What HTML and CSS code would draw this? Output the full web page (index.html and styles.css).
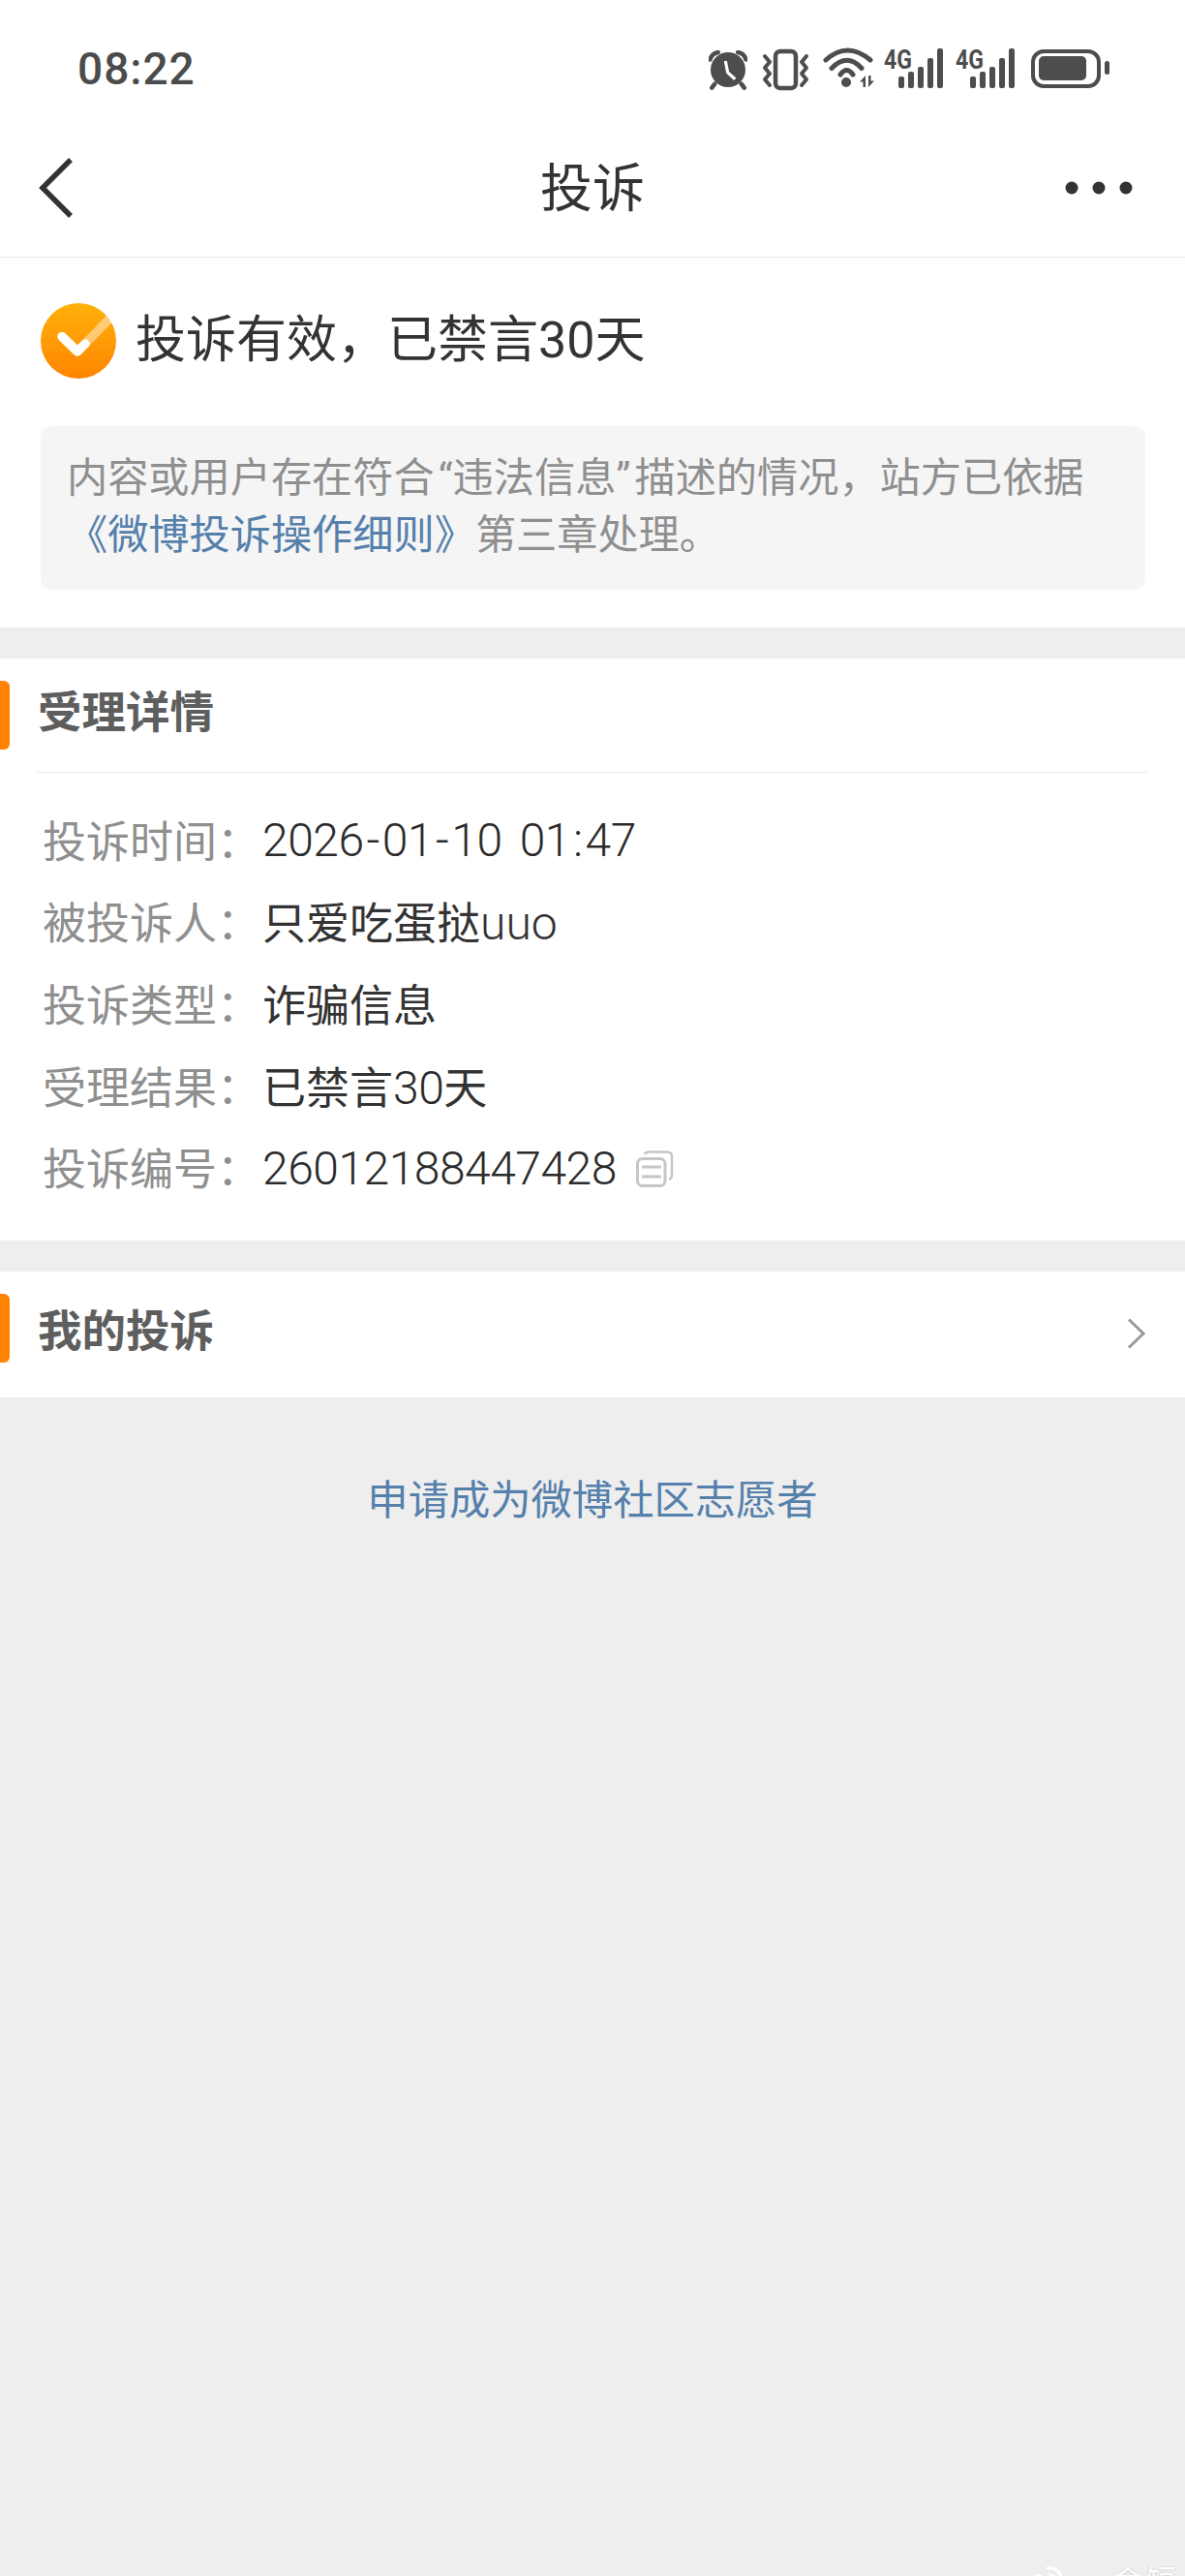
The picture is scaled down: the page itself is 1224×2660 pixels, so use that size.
FILE: index.html
```html
<!DOCTYPE html>
<html lang="zh-CN">
<head>
    <meta charset="UTF-8">
    <meta name="viewport" content="width=device-width, initial-scale=1.0">
    <title>投诉</title>
    <link rel="stylesheet" href="styles.css">
</head>
<body>

    <div class="status-bar">
        <span class="time">08:22</span>
        <div class="status-icons">
            <svg class="icon-alarm" width="40" height="42" viewBox="0 0 40 42">
                <circle cx="20" cy="20" r="18" fill="#4d4d4d"/>
                <path d="M17.3 11 L19.7 23 L27.3 29.7" fill="none" stroke="#fff" stroke-width="3.2"/>
                <path d="M1.500 9.500 Q3 3.500 9.700 2 M30.300 2 Q37 3.500 38.500 9.500 M6.300 34.700 L3.300 38.700 M33.700 34.700 L36.700 38.700" fill="none" stroke="#4d4d4d" stroke-width="4.500" stroke-linecap="round"/>
            </svg>
            <svg width="51" height="44" viewBox="0 0 51 44">
                <rect x="15" y="3" width="21" height="38" rx="5" fill="none" stroke="#4d4d4d" stroke-width="4.500"/>
                <path d="M4 8 L9 14 L4 20 L9 26 L4 32 L9 38 M47 8 L42 14 L47 20 L42 26 L47 32 L42 38" fill="none" stroke="#4d4d4d" stroke-width="4" stroke-linecap="round" stroke-linejoin="round"/>
            </svg>
            <svg class="icon-wifi" width="55" height="48" viewBox="0 0 55 48">
                <path d="M3 14 Q25 -6 49 14 M9 22.500 Q25 6 40 22.500 M18 29 Q24.500 20 31 29" fill="none" stroke="#4d4d4d" stroke-width="5" stroke-linecap="round"/>
                <circle cx="24" cy="37" r="5" fill="#4d4d4d"/>
                <path d="M44 30 V42 H41.500 V36.500 H38 Z M47 42 V30 H49.500 V35.500 H53 Z" fill="#4d4d4d"/>
            </svg>
            <svg class="icon-signal" width="61" height="50" viewBox="0 -8 61 50">
                <text class="net-label" x="0" y="21" textLength="29" lengthAdjust="spacingAndGlyphs">4G</text>
                <rect x="15" y="29" width="6" height="12" rx="2" fill="#4d4d4d"/>
                <rect x="25" y="24" width="6" height="17" rx="2" fill="#4d4d4d"/>
                <rect x="35" y="19" width="6" height="22" rx="2" fill="#4d4d4d"/>
                <rect x="45" y="10" width="6" height="31" rx="2" fill="#4d4d4d"/>
                <rect x="55" y="0" width="6" height="41" rx="2" fill="#4d4d4d"/>
            </svg>
            <svg class="icon-signal" width="61" height="50" viewBox="0 -8 61 50">
                <text class="net-label" x="0" y="21" textLength="29" lengthAdjust="spacingAndGlyphs">4G</text>
                <rect x="15" y="29" width="6" height="12" rx="2" fill="#4d4d4d"/>
                <rect x="25" y="24" width="6" height="17" rx="2" fill="#4d4d4d"/>
                <rect x="35" y="19" width="6" height="22" rx="2" fill="#4d4d4d"/>
                <rect x="45" y="10" width="6" height="31" rx="2" fill="#4d4d4d"/>
                <rect x="55" y="0" width="6" height="41" rx="2" fill="#4d4d4d"/>
            </svg>
            <svg class="icon-battery" width="81" height="40" viewBox="0 0 81 40">
                <rect x="2" y="2" width="68" height="36" rx="11" fill="none" stroke="#4d4d4d" stroke-width="4"/>
                <rect x="8" y="7" width="49" height="25" rx="5" fill="#4d4d4d"/>
                <rect x="76" y="12" width="5" height="14" rx="2.500" fill="#4d4d4d"/>
            </svg>
        </div>
    </div>

    <div class="nav-bar">
        <svg class="nav-back" width="38" height="64" viewBox="0 0 38 64">
            <path d="M35 3 L6 32 L35 61" fill="none" stroke="#333" stroke-width="5.500"/>
        </svg>
        <h1 class="nav-title">投诉</h1>
        <svg class="nav-more" width="70" height="14" viewBox="0 0 70 14">
            <circle cx="7" cy="7" r="6.500" fill="#333"/>
            <circle cx="35" cy="7" r="6.500" fill="#333"/>
            <circle cx="63" cy="7" r="6.500" fill="#333"/>
        </svg>
    </div>

    <div class="result-panel">
        <div class="result-head">
            <svg width="78" height="78" viewBox="0 0 78 78">
                <defs>
                    <linearGradient id="check-fill" x1="0" y1="0" x2="0" y2="1">
                        <stop offset="0" stop-color="#ffb10a"/>
                        <stop offset="1" stop-color="#ff8500"/>
                    </linearGradient>
                    <clipPath id="check-clip"><circle cx="39" cy="39" r="39"/></clipPath>
                </defs>
                <circle cx="39" cy="39" r="39" fill="url(#check-fill)"/>
                <path d="M46 42 L74 13" clip-path="url(#check-clip)" fill="none" stroke="#fff" stroke-opacity="0.45" stroke-width="9"/>
                <path d="M22 34.500 L38 50 L46 42" fill="none" stroke="#fff" stroke-width="9.500" stroke-linecap="round" stroke-linejoin="round"/>
            </svg>
            <span class="result-text">投诉有效，已禁言30天</span>
        </div>
        <div class="result-note">
            内容或用户存在符合<span class="quote-open">“</span>违法信息<span class="quote-close">”</span>描述的情况，站方已依据<br>
            <a class="link" href="#">《微博投诉操作细则》</a>第三章处理。
        </div>
    </div>

    <div class="section">
        <div class="section-head">
            <i class="section-mark"></i>
            <h2 class="section-title">受理详情</h2>
        </div>
        <div class="detail-list">
            <div class="detail-row">
                <span class="detail-label">投诉时间：</span>
                <span class="detail-value num">2026<span class="sep">-</span>01<span class="sep">-</span>10 01<span class="sep">:</span>47</span>
            </div>
            <div class="detail-row">
                <span class="detail-label">被投诉人：</span>
                <span class="detail-value">只爱吃蛋挞<span class="latin">uuo</span></span>
            </div>
            <div class="detail-row">
                <span class="detail-label">投诉类型：</span>
                <span class="detail-value">诈骗信息</span>
            </div>
            <div class="detail-row">
                <span class="detail-label">受理结果：</span>
                <span class="detail-value">已禁言<span class="num">30</span>天</span>
            </div>
            <div class="detail-row">
                <span class="detail-label">投诉编号：</span>
                <span class="detail-value num">26012188447428</span>
                <svg class="copy-icon" width="39" height="38" viewBox="0 0 39 38">
                    <rect x="1.500" y="8.500" width="28.500" height="28" rx="5" fill="none" stroke="#c6c6c6" stroke-width="3"/>
                    <path d="M9 4 Q10 1.500 13 1.500 H32 Q37 1.500 37 6.500 V25 Q37 29 34 30" fill="none" stroke="#c6c6c6" stroke-width="2.500"/>
                    <path d="M6 17 H26 M6 27 H26" fill="none" stroke="#c6c6c6" stroke-width="3"/>
                </svg>
            </div>
        </div>
    </div>

    <div class="section section-link">
        <div class="section-head">
            <i class="section-mark"></i>
            <h2 class="section-title">我的投诉</h2>
            <svg class="arrow-right" width="20" height="32" viewBox="0 0 20 32">
                <path d="M2 1.500 L17 16 L2 30.500" fill="none" stroke="#999" stroke-width="3"/>
            </svg>
        </div>
    </div>

    <a class="volunteer" href="#">申请成为微博社区志愿者</a>

    <div class="watermark">
        <svg width="34" height="24" viewBox="0 0 34 24">
            <path d="M17 2 Q30 0 33 14" fill="none" stroke="#fff" stroke-width="3"/>
            <path d="M19 9 Q26 8 27 16" fill="none" stroke="#fff" stroke-width="3"/>
            <ellipse cx="8" cy="14" rx="7" ry="6" fill="#fff"/>
        </svg>
        <span class="watermark-text">金短</span>
    </div>

</body>
</html>
```

FILE: styles.css
```css
* {
    box-sizing: border-box;
}

body {
    font-family: Roboto, "Noto Sans CJK SC", sans-serif;
    background-color: #eee;
    color: #333;
    position: relative;
    width: 1224px;
    height: 2660px;
    margin: 0;
    overflow: hidden;
}

a {
    text-decoration: none;
}

/* status bar */
.status-bar {
    background: white;
    display: flex;
    justify-content: space-between;
    align-items: flex-start;
    height: 122px;
    padding: 50px 78px 0 80px;
}

.time {
    color: #4b4b4b;
    font-size: 46px;
    font-weight: 500;
    line-height: 42px;
    letter-spacing: 1px;
}

.status-icons {
    display: flex;
    align-items: flex-start;
    gap: 13px;
}

.icon-alarm {
    margin-top: 2px;
    margin-right: 1px;
}

.icon-wifi {
    margin-top: -2px;
    margin-right: -5px;
}

.icon-signal {
    margin-top: -8px;
}

.icon-battery {
    margin-top: 1px;
    margin-left: 4px;
}

.net-label {
    font-family: Roboto, sans-serif;
    font-size: 27px;
    font-weight: 700;
    fill: #4d4d4d;
}

/* nav */
.nav-bar {
    background: white;
    display: grid;
    grid-template-columns: 1fr auto 1fr;
    align-items: center;
    height: 144px;
    padding: 0 54px;
    border-bottom: 1px solid #e8e8e8;
}

.nav-back {
    margin-left: -16px;
}

.nav-title {
    font-size: 54px;
    font-weight: 400;
    line-height: 64px;
    margin: 4px 0 0;
}

.nav-more {
    justify-self: end;
}

/* result */
.result-panel {
    background: white;
    padding: 47px 41px 39px 42px;
}

.result-head {
    display: flex;
    align-items: center;
    gap: 20px;
}

.result-text {
    font-size: 52px;
    line-height: 78px;
}

.result-note {
    background: #f5f5f5;
    border-radius: 12px;
    color: #8f8f8f;
    font-size: 42.2px;
    line-height: 59px;
    margin-top: 49px;
    padding: 24px 20px 27px 27px;
    white-space: nowrap;
}

.quote-open {
    margin-left: 4px;
}

.quote-close {
    margin-right: 4px;
}

.link {
    color: #5580ab;
}

/* sections */
.section {
    background: white;
    margin-top: 32px;
}

.section-head {
    display: flex;
    align-items: center;
    height: 117px;
}

.section-mark {
    background: #ff8200;
    border-radius: 0 6px 6px 0;
    width: 10px;
    height: 71px;
}

.section-title {
    color: #5e5e5e;
    font-size: 45.5px;
    font-weight: 700;
    line-height: 60px;
    margin: -3px 0 0 29px;
}

.detail-list {
    border-top: 1px solid #e9e9e9;
    margin: 0 40px 0 38px;
    padding: 26px 0 34px 6px;
}

.detail-row {
    display: flex;
    align-items: center;
    height: 84.6px;
}

.detail-label {
    color: #8f8f8f;
    font-size: 45px;
    width: 227px;
}

.detail-value {
    font-size: 45px;
}

.num {
    color: #2b2b2b;
    font-size: 48px;
    font-weight: 300;
    letter-spacing: -0.5px;
    word-spacing: 7px;
}

.detail-value.num {
    margin-top: 3px;
}

.sep {
    padding: 0 3px;
}

.latin {
    font-size: 48px;
    font-weight: 300;
}

.copy-icon {
    margin-left: 20px;
    margin-top: 4px;
}

.section-link {
    height: 130px;
}

.section-link .section-title {
    margin-top: 10px;
}

.arrow-right {
    margin-left: auto;
    margin-right: 40px;
    margin-top: 11px;
}

.volunteer {
    display: block;
    color: #5580ab;
    font-size: 42.3px;
    line-height: 60px;
    text-align: center;
    margin-top: 77px;
}

/* cut off by the bottom edge, as in the photo */
.watermark {
    position: absolute;
    left: 1064px;
    top: 2650px;
    display: flex;
    align-items: flex-start;
    gap: 12px;
}

.watermark-text {
    color: #fff;
    font-size: 30px;
    line-height: 30px;
    letter-spacing: 4px;
    margin-left: 40px;
    text-shadow: 0 0 2px #bbb;
}
```
